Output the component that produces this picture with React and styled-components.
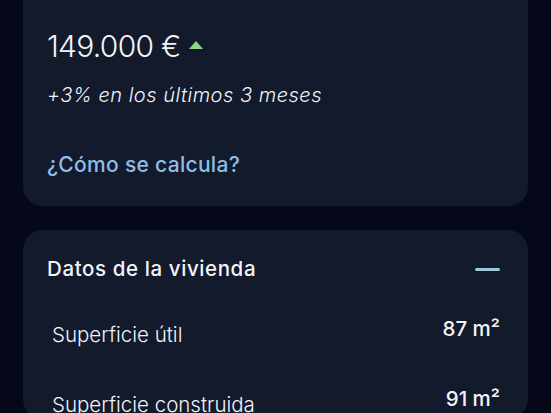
import React from 'react'
import styled, { createGlobalStyle } from "styled-components";

const GlobalStyle = createGlobalStyle`
  html, body {
    margin: 0;
    padding: 0;
    background: #040818;
    overflow: hidden;
  }
  body {
    font-family: Inter, "Noto Sans", "Liberation Sans", sans-serif;
    color: #f2f4f8;
  }
`;

export default function App() {
  return (
    <Page>
      <GlobalStyle />
      <Card $top>
        <PriceRow>
          <Price>149.000 €</Price>
          <TrendUp viewBox="0 0 14 8" aria-hidden="true">
            <path d="M7 0 L14 8 L0 8 Z" fill="#8ed684" />
          </TrendUp>
        </PriceRow>
        <Change>+3% en los últimos 3 meses</Change>
        <Link href="#">¿Cómo se calcula?</Link>
      </Card>

      <Card>
        <CardHeader>
          <CardTitle>Datos de la vivienda</CardTitle>
          <Collapse aria-label="Contraer" />
        </CardHeader>
        <DataRow>
          <Label>Superficie útil</Label>
          <Value>87 m²</Value>
        </DataRow>
        <DataRow>
          <Label>Superficie construida</Label>
          <Value>91 m²</Value>
        </DataRow>
      </Card>
    </Page>
  )
}

const Page = styled.div`
  display: flex;
  flex-direction: column;
  gap: 24px;
  padding: 0 23px;
`;

const Card = styled.section`
  background: #131a2c;
  border-radius: 20px;
  margin-top: ${p => (p.$top ? "-40px" : "0")};
  padding: ${p => (p.$top ? "68px 28px 28px 24px" : "25px 28px 0 24px")};
`;

const PriceRow = styled.div`
  display: flex;
  align-items: center;
  gap: 8px;
`;

const Price = styled.span`
  font-size: 30px;
  font-weight: 300;
  line-height: 36px;
  letter-spacing: -0.7px;
`;

const TrendUp = styled.svg`
  width: 14px;
  height: 8px;
  margin-top: -3px;
`;

const Change = styled.p`
  margin: 18px 0 0;
  font-size: 20px;
  font-style: italic;
  font-weight: 300;
  line-height: 26px;
  letter-spacing: 0.5px;
`;

const Link = styled.a`
  display: inline-block;
  margin-top: 44px;
  font-size: 21px;
  font-weight: 500;
  line-height: 26px;
  letter-spacing: 0.3px;
  color: #8fbde6;
  text-decoration: none;
`;

const CardHeader = styled.div`
  display: flex;
  align-items: center;
  justify-content: space-between;
`;

const CardTitle = styled.h2`
  margin: 0;
  font-size: 20.5px;
  font-weight: 500;
  line-height: 28px;
  letter-spacing: 0.6px;
`;

const Collapse = styled.button`
  width: 25px;
  height: 3px;
  padding: 0;
  border: 0;
  border-radius: 2px;
  background: #9ccadb;
`;

const DataRow = styled.div`
  display: flex;
  justify-content: space-between;
  align-items: flex-start;
  margin-top: 32px;
  padding-left: 5px;
  & + & {
    margin-top: 36px;
  }
`;

const Label = styled.span`
  font-size: 20.5px;
  font-weight: 300;
  line-height: 28px;
  margin-top: 6px;
`;

const Value = styled.span`
  font-size: 20.5px;
  font-weight: 500;
  line-height: 28px;
`;
